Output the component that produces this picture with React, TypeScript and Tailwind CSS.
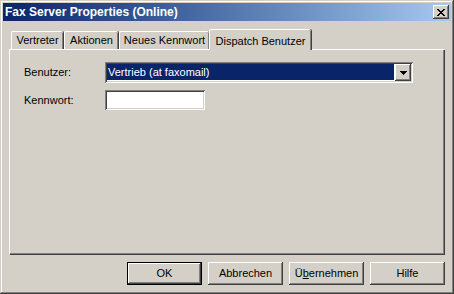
import React from 'react'

const raised =
  'shadow-[inset_-1px_-1px_#404040,inset_1px_1px_#ffffff,inset_-2px_-2px_#808080,inset_2px_2px_#d4d0c8]'
const sunken =
  'shadow-[inset_1px_1px_#808080,inset_-1px_-1px_#ffffff,inset_2px_2px_#404040,inset_-2px_-2px_#d4d0c8]'

const tabs = [
  { label: 'Vertreter', w: 'w-[52px]' },
  { label: 'Aktionen', w: 'w-[54px]' },
  { label: 'Neues Kennwort', w: 'w-[90px]' },
]

function CloseGlyph() {
  const rows = ['11000011', '01100110', '00111100', '00011000', '00111100', '01100110', '11000011']
  return (
    <svg width="8" height="7" viewBox="0 0 8 7" shapeRendering="crispEdges">
      {rows.flatMap((r, y) =>
        r.split('').map((c, x) => (c === '1' ? <rect key={`${x}-${y}`} x={x} y={y} width="1" height="1" fill="#000" /> : null)),
      )}
    </svg>
  )
}

function DownArrow() {
  return (
    <svg width="7" height="4" viewBox="0 0 7 4" shapeRendering="crispEdges">
      <rect x="0" y="0" width="7" height="1" fill="#000" />
      <rect x="1" y="1" width="5" height="1" fill="#000" />
      <rect x="2" y="2" width="3" height="1" fill="#000" />
      <rect x="3" y="3" width="1" height="1" fill="#000" />
    </svg>
  )
}

function Button({ children, isDefault }: { children: React.ReactNode; isDefault?: boolean }) {
  return (
    <button
      className={`w-[75px] h-[23px] flex items-center justify-center bg-[#d4d0c8] text-black text-[11px] ${
        isDefault
          ? 'border border-black shadow-[inset_-1px_-1px_#404040,inset_1px_1px_#ffffff,inset_-2px_-2px_#808080]'
          : raised
      }`}
    >
      {children}
    </button>
  )
}

export default function App() {
  return (
    <div className="w-[454px] h-[294px] bg-[#d4d0c8] p-[3px] flex flex-col font-['Liberation_Sans',Arial,sans-serif] text-[11px] text-black shadow-[inset_-1px_-1px_#404040,inset_1px_1px_#d4d0c8,inset_-2px_-2px_#808080,inset_2px_2px_#ffffff]">
      {/* Title bar */}
      <div className="h-[18px] flex items-center pl-[2px] pr-[2px] bg-gradient-to-r from-[#0a246a] to-[#a6caf0]">
        <span className="text-white font-bold text-[12px] leading-none">Fax Server Properties (Online)</span>
        <div className={`ml-auto w-[16px] h-[14px] bg-[#d4d0c8] flex items-center justify-center ${raised}`}>
          <CloseGlyph />
        </div>
      </div>

      {/* Tabs */}
      <div className="mt-[8px] mx-[6px] flex flex-col">
        <div className="flex items-end pl-[2px] h-[20px]">
          {tabs.map((t) => (
            <div
              key={t.label}
              className={`${t.w} h-[18px] flex items-center justify-center border-t border-l border-white rounded-tl-[2px] rounded-tr-[2px] shadow-[inset_-1px_0_#808080,1px_0_#404040] mr-[1px] last:mr-0`}
            >
              {t.label}
            </div>
          ))}
          <div className="relative z-10 w-[102px] h-[21px] -mb-[1px] -ml-[1px] flex items-start justify-center pt-[3px] bg-[#d4d0c8] border-t border-l border-white rounded-tl-[2px] rounded-tr-[2px] shadow-[inset_-1px_0_#808080,1px_0_#404040]">
            Dispatch Benutzer
          </div>
        </div>

        {/* Panel */}
        <div className="h-[205px] border-t border-l border-white shadow-[inset_-1px_-1px_#808080,1px_1px_#404040] mr-[1px] pt-[12px] pl-[14px] flex flex-col">
          <div className="flex items-center h-[21px]">
            <span className="w-[81px]">Benutzer:</span>
            <div className={`w-[308px] h-[21px] bg-white p-[2px] flex ${sunken}`}>
              <div className="flex-1 h-[16px] bg-[#0a246a] text-white flex items-center pl-[1px] mr-[1px]">
                Vertrieb (at faxomail)
              </div>
              <div className={`w-[16px] h-[17px] bg-[#d4d0c8] flex items-center justify-center ${raised}`}>
                <DownArrow />
              </div>
            </div>
          </div>
          <div className="flex items-center h-[20px] mt-[7px]">
            <span className="w-[81px]">Kennwort:</span>
            <div className={`w-[100px] h-[20px] bg-white ${sunken}`} />
          </div>
        </div>
      </div>

      {/* Buttons */}
      <div className="mt-[8px] mr-[6px] flex justify-end gap-[6px]">
        <Button isDefault>OK</Button>
        <Button>Abbrechen</Button>
        <Button>
          Ü<span className="underline">b</span>ernehmen
        </Button>
        <Button>Hilfe</Button>
      </div>
    </div>
  )
}
